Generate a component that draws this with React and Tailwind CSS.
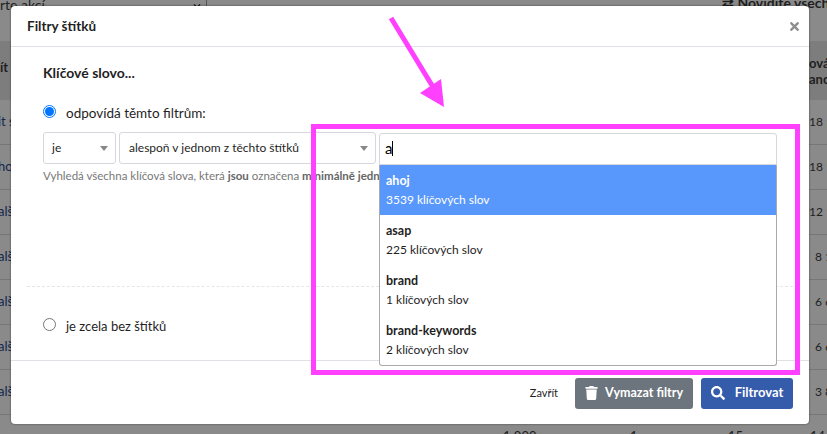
import React from 'react';
import { FaChevronDown, FaSearch, FaTimes, FaTrash } from 'react-icons/fa';

const rows = [
  { left: 'it s', right: '18 1', width: 'w-[18px]' },
  { left: 'hoj', right: '18 1', width: 'w-[18px]' },
  { left: 'alš', right: '12 1', width: 'w-[18px]' },
  { left: 'alš', right: '8 1', width: 'w-[12px]' },
  { left: 'alš', right: '6 6', width: 'w-[12px]' },
  { left: 'alš', right: '6 6', width: 'w-[12px]' },
  { left: 'alš', right: '3 8', width: 'w-[12px]' },
];

const options = [
  { name: 'ahoj', count: '3539 klíčových slov', active: true },
  { name: 'asap', count: '225 klíčových slov' },
  { name: 'brand', count: '1 klíčových slov' },
  { name: 'brand-keywords', count: '2 klíčových slov' },
];

const Caret = () => (
  <span className="h-0 w-0 border-x-[4px] border-t-[5px] border-x-transparent border-t-[#888888]" />
);

const App = () => {
  return (
    <div className="relative h-[434px] w-[827px] overflow-hidden bg-[#8a8a8a] font-['Lato',sans-serif] text-[13px] text-[#1f1f1f]">
      {/* page behind the modal */}
      <div className="flex h-[41px] items-start text-[14px] leading-none">
        <span className="mt-[-2px] w-[193px] shrink-0">rte akcí</span>
        <FaChevronDown className="mt-[2px] h-[8px] w-[8px] shrink-0" />
        <span className="ml-[5px] h-[6px] w-px shrink-0 bg-[#555555]" />
        <span className="ml-[515px] mt-[-4px] w-[105px] shrink-0 whitespace-nowrap font-bold">⇄ Novidíte všech</span>
      </div>
      <div className="flex h-[59px] items-center justify-between bg-[#7d7d7d] font-bold">
        <span className="mt-[-6px]">ít</span>
        <span className="w-[18px] whitespace-nowrap leading-4">ová<br />anc</span>
      </div>
      {rows.map((row, i) => (
        <div key={i} className="flex h-[45px] items-center justify-between border-b border-[#777777]">
          <span className="ml-[-2px] text-[#14264d]">{row.left}</span>
          <span className={`${row.width} whitespace-nowrap text-[12px]`}>{row.right}</span>
        </div>
      ))}
      <div className="flex pt-[13px] leading-4">
        <span className="ml-[503px] w-[127px]">1 000</span>
        <span className="w-[98px]">1</span>
        <span className="w-[82px]">15</span>
        <span>14</span>
      </div>

      {/* modal */}
      <div className="absolute left-[11px] top-[6px] flex h-[418px] w-[798px] flex-col rounded-[4px] bg-white shadow-[0_0_2px_rgba(0,0,0,0.6)]">
        <div className="flex h-[41px] shrink-0 items-center justify-between border-b border-[#dee2e6] pl-[16px] pr-[8px]">
          <span className="text-[13.5px] font-bold">Filtry štítků</span>
          <FaTimes className="h-[13px] w-[13px] text-[#8f8f8f]" />
        </div>

        <div className="flex flex-1 flex-col">
          <div className="mx-[16px] flex h-[240px] shrink-0 flex-col border-b border-dashed border-[#e6e6e6] pl-[16px]">
            <p className="mt-[18px] text-[14px] font-bold leading-4">Klíčové slovo...</p>
            <label className="mt-[21px] flex items-center gap-[10px] text-[13.5px] leading-4">
              <span className="flex h-[13px] w-[13px] items-center justify-center rounded-full border border-[#0075ff]">
                <span className="h-[9px] w-[9px] rounded-full bg-[#0075ff]" />
              </span>
              <span className="mt-[3px]">odpovídá těmto filtrům:</span>
            </label>
            <div className="mt-[11px] flex gap-[3px] text-[12px]">
              <div className="flex h-[32px] w-[73px] items-center justify-between rounded-[3px] border border-[#d4d7dc] pl-[8px] pr-[7px]">
                je
                <Caret />
              </div>
              <div className="flex h-[32px] w-[257px] items-center justify-between rounded-[3px] border border-[#d4d7dc] pl-[9px] pr-[7px]">
                alespoň v jednom z těchto štítků
                <Caret />
              </div>
            </div>
            <p className="mt-[4px] whitespace-nowrap text-[11.5px] leading-4 text-[#777777]">
              Vyhledá všechna klíčová slova, která <b className="text-[#666666]">jsou</b> označena <b className="text-[#666666]">minimálně jedním</b>
            </p>
          </div>
          <label className="ml-[32px] mt-[28px] flex items-center gap-[10px] text-[13px] leading-4">
            <span className="h-[13px] w-[13px] rounded-full border border-[#767676]" />
            <span className="mt-[3px]">je zcela bez štítků</span>
          </label>
        </div>

        <div className="flex h-[64px] shrink-0 items-center justify-end border-t border-[#dee2e6] pr-[16px] pt-[1px]">
          <span className="mr-[17px] text-[11px]">Zavřít</span>
          <button className="mr-[8px] flex h-[31px] w-[118px] items-center justify-center gap-[7px] rounded-[3px] bg-[#6c757d] text-[12.5px] font-bold text-white">
            <FaTrash className="h-[14px] w-[13px]" />
            Vymazat filtry
          </button>
          <button className="flex h-[31px] w-[92px] items-center justify-center gap-[10px] rounded-[3px] bg-[#345caa] text-[13px] font-bold text-white">
            <FaSearch className="h-[14px] w-[14px]" />
            Filtrovat
          </button>
        </div>
      </div>

      {/* open select with its results */}
      <div className="absolute left-[379px] top-[133px] w-[398px]">
        <div className="flex h-[32px] items-center rounded-t-[3px] border border-[#d4d7dc] bg-white pb-[2px] pl-[5px] text-[15px] text-black">
          a<span className="h-[15px] w-px bg-black" />
        </div>
        <div className="h-[201px] overflow-hidden rounded-b-[3px] border-x border-b border-[#aaaaaa] bg-white">
          {options.map((option) => (
            <div
              key={option.name}
              className={option.active ? 'flex h-[50px] flex-col justify-center bg-[#5897fb] pl-[6px] pt-[1px] text-white' : 'flex h-[50px] flex-col justify-center pl-[6px] pt-[2px]'}
            >
              <span className="text-[12.5px] font-bold leading-[18px]">{option.name}</span>
              <span className="text-[12px] leading-[20px]">{option.count}</span>
            </div>
          ))}
        </div>
      </div>

      {/* pink annotation */}
      <div className="pointer-events-none absolute left-[311px] top-[124px] h-[251px] w-[489px] border-[5px] border-[#ff40ff]" />
      <svg className="pointer-events-none absolute left-0 top-0" width="827" height="434" viewBox="0 0 827 434">
        <path d="M391 18 L433 87" stroke="#ff40ff" strokeWidth="5" fill="none" />
        <path d="M444 107 L441 79 L420 93 Z" fill="#ff40ff" />
      </svg>
    </div>
  );
};

export default App;
